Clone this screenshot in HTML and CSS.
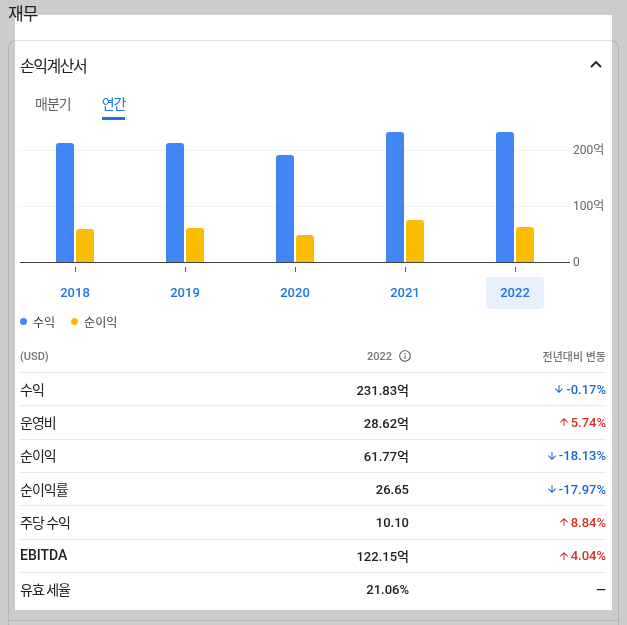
FILE: index.html
```html
<!DOCTYPE html>
<html lang="ko">
<head>
    <meta charset="UTF-8">
    <meta name="viewport" content="width=device-width, initial-scale=1.0">
    <title>재무</title>
    <link rel="stylesheet" href="styles.css">
</head>
<body>
    <h1 class="page-title">재무</h1>

    <section class="card">
        <div class="card-header">
            <span class="card-title">손익계산서</span>
            <svg class="chevron" viewBox="0 0 24 24" width="24" height="24"><path d="M7 14l5-5 5 5"/></svg>
        </div>

        <div class="tabs">
            <span class="tab">매분기</span>
            <span class="tab tab-active">연간</span>
        </div>

        <div class="chart">
            <div class="chart-row">
                <div class="plot">
                    <div class="bar-group"><div class="bar bar-revenue" style="height:119px"></div><div class="bar bar-income" style="height:33px"></div></div>
                    <div class="bar-group"><div class="bar bar-revenue" style="height:119.5px"></div><div class="bar bar-income" style="height:34px"></div></div>
                    <div class="bar-group"><div class="bar bar-revenue" style="height:107.5px"></div><div class="bar bar-income" style="height:27px"></div></div>
                    <div class="bar-group"><div class="bar bar-revenue" style="height:130px"></div><div class="bar bar-income" style="height:42px"></div></div>
                    <div class="bar-group"><div class="bar bar-revenue" style="height:130px"></div><div class="bar bar-income" style="height:34.6px"></div></div>
                </div>
                <div class="y-axis">
                    <span>200억</span>
                    <span>100억</span>
                    <span>0</span>
                </div>
            </div>
            <div class="x-axis">
                <div class="x-item"><span class="tick"></span><span class="year">2018</span></div>
                <div class="x-item"><span class="tick"></span><span class="year">2019</span></div>
                <div class="x-item"><span class="tick"></span><span class="year">2020</span></div>
                <div class="x-item"><span class="tick"></span><span class="year">2021</span></div>
                <div class="x-item"><span class="tick"></span><span class="year year-active">2022</span></div>
            </div>
        </div>

        <div class="legend">
            <span class="legend-item"><span class="dot dot-revenue"></span>수익</span>
            <span class="legend-item"><span class="dot dot-income"></span>순이익</span>
        </div>

        <div class="fin-table">
            <div class="fin-row fin-head">
                <span>(USD)</span>
                <span class="head-year">2022
                    <svg class="info-icon" viewBox="0 0 24 24" width="14" height="14"><path d="M11 7h2v2h-2zm0 4h2v6h-2zm1-9C6.48 2 2 6.48 2 12s4.480 10 10 10 10-4.48 10-10S17.52 2 12 2zm0 18c-4.41 0-8-3.59-8-8s3.59-8 8-8 8 3.59 8 8-3.59 8-8 8z"/></svg>
                </span>
                <span class="head-change">전년대비 변동</span>
            </div>
            <div class="fin-row">
                <span class="fin-label">수익</span>
                <span class="fin-value">231.83억</span>
                <span class="fin-change down"><svg class="arrow" viewBox="0 0 24 24" width="12" height="12"><path d="M20 12l-1.41-1.41L13 16.17V4h-2v12.17l-5.58-5.59L4 12l8 8 8-8z"/></svg>-0.17%</span>
            </div>
            <div class="fin-row">
                <span class="fin-label">운영비</span>
                <span class="fin-value">28.62억</span>
                <span class="fin-change up"><svg class="arrow" viewBox="0 0 24 24" width="12" height="12"><path d="M4 12l1.41 1.41L11 7.83V20h2V7.83l5.58 5.59L20 12l-8-8-8 8z"/></svg>5.74%</span>
            </div>
            <div class="fin-row">
                <span class="fin-label">순이익</span>
                <span class="fin-value">61.77억</span>
                <span class="fin-change down"><svg class="arrow" viewBox="0 0 24 24" width="12" height="12"><path d="M20 12l-1.41-1.41L13 16.17V4h-2v12.17l-5.58-5.59L4 12l8 8 8-8z"/></svg>-18.13%</span>
            </div>
            <div class="fin-row">
                <span class="fin-label">순이익률</span>
                <span class="fin-value">26.65</span>
                <span class="fin-change down"><svg class="arrow" viewBox="0 0 24 24" width="12" height="12"><path d="M20 12l-1.41-1.41L13 16.17V4h-2v12.17l-5.58-5.59L4 12l8 8 8-8z"/></svg>-17.97%</span>
            </div>
            <div class="fin-row">
                <span class="fin-label">주당 수익</span>
                <span class="fin-value">10.10</span>
                <span class="fin-change up"><svg class="arrow" viewBox="0 0 24 24" width="12" height="12"><path d="M4 12l1.41 1.41L11 7.83V20h2V7.83l5.58 5.59L20 12l-8-8-8 8z"/></svg>8.84%</span>
            </div>
            <div class="fin-row">
                <span class="fin-label fin-label-latin">EBITDA</span>
                <span class="fin-value">122.15억</span>
                <span class="fin-change up"><svg class="arrow" viewBox="0 0 24 24" width="12" height="12"><path d="M4 12l1.41 1.41L11 7.83V20h2V7.83l5.58 5.59L20 12l-8-8-8 8z"/></svg>4.04%</span>
            </div>
            <div class="fin-row">
                <span class="fin-label">유효 세율</span>
                <span class="fin-value">21.06%</span>
                <span class="fin-change">—</span>
            </div>
        </div>

        <div class="card-next"></div>
    </section>
</body>
</html>
```

FILE: styles.css
```css
/* Nền trang */
html {
    background-color: #cccccc;
    overflow: hidden;
}

body {
    margin: 0 8px;
    font-family: Roboto, "Noto Sans CJK KR", sans-serif;
    color: #202124;
}

/* Tấm nền trắng phía sau */
body::before {
    content: "";
    position: fixed;
    left: 15px;
    top: 15px;
    width: 597px;
    height: 595px;
    background-color: #ffffff;
    z-index: -1;
}

.page-title {
    margin: 0;
    padding-top: 2px;
    font-size: 17px;
    font-weight: 400;
    line-height: 24px;
    letter-spacing: -1px;
}

/* Thẻ báo cáo */
.card {
    margin-top: 14px;
    border: 1px solid rgba(0, 0, 0, 0.12);
    border-bottom: none;
    border-radius: 8px 8px 0 0;
    padding: 0 12px 0 11px;
}

.card-header {
    height: 48px;
    display: flex;
    align-items: center;
    justify-content: space-between;
}

.card-title {
    font-size: 16px;
    letter-spacing: -1.5px;
    margin-top: -1px;
}

.chevron {
    fill: none;
    stroke: #202124;
    stroke-width: 1.8;
    margin-right: -2px;
}

/* Tabs */
.tabs {
    display: flex;
    gap: 31px;
    padding-left: 15px;
}

.tab {
    font-size: 14px;
    line-height: 20px;
    padding: 5px 0 3px;
    color: #5f6368;
    letter-spacing: -1px;
    border-bottom: 3px solid transparent;
}

.tab-active {
    color: #1a73e8;
    border-bottom-color: #1a73e8;
}

/* Biểu đồ */
.chart-row {
    display: flex;
}

.plot {
    width: 550px;
    height: 142px;
    display: flex;
    align-items: flex-end;
    border-bottom: 1px solid #3c4043;
    background-image: linear-gradient(to bottom,
        transparent 30px, #f1f3f4 30px, #f1f3f4 31px, transparent 31px,
        transparent 86px, #f1f3f4 86px, #f1f3f4 87px, transparent 87px);
}

.bar-group {
    width: 110px;
    display: flex;
    justify-content: center;
    align-items: flex-end;
    gap: 2px;
}

.bar {
    width: 18px;
    border-radius: 3px 3px 0 0;
}

.bar-revenue {
    background-color: #4285f4;
}

.bar-income {
    background-color: #fbbc04;
}

.y-axis {
    display: flex;
    flex-direction: column;
    gap: 42px;
    padding: 23px 0 0 3px;
    margin-bottom: -7px;
    font-size: 12px;
    line-height: 14px;
    color: #5f6368;
}

.x-axis {
    display: flex;
    width: 550px;
}

.x-item {
    width: 110px;
    display: flex;
    flex-direction: column;
    align-items: center;
}

.tick {
    width: 1px;
    height: 5px;
    margin-top: 4px;
    background-color: #5f6368;
}

.year {
    margin-top: 5px;
    width: 58px;
    height: 32px;
    line-height: 32px;
    text-align: center;
    border-radius: 4px;
    font-size: 13px;
    font-weight: 500;
    color: #1a73e8;
}

.year-active {
    background-color: #e8f0fe;
}

/* Chú thích */
.legend {
    display: flex;
    align-items: center;
    height: 24px;
    font-size: 12px;
    color: #3c4043;
}

.legend-item {
    display: flex;
    align-items: center;
    gap: 6px;
    margin-right: 16px;
}

.dot {
    width: 7px;
    height: 7px;
    border-radius: 50%;
}

.dot-revenue {
    background-color: #4285f4;
}

.dot-income {
    background-color: #fbbc04;
}

/* Bảng số liệu */
.fin-table {
    margin-top: 7px;
}

.fin-row {
    display: grid;
    grid-template-columns: 1fr 120px 196px;
    align-items: center;
    box-sizing: border-box;
    height: 33.33px;
    border-bottom: 1px solid #e8eaed;
}

.fin-row:last-child {
    border-bottom: none;
}

.fin-head {
    height: 33px;
    font-size: 11px;
    font-weight: 500;
    color: #70757a;
}

.head-year {
    display: flex;
    justify-content: flex-end;
    align-items: center;
    gap: 6px;
}

.info-icon {
    fill: #5f6368;
    margin-right: -2px;
}

.head-change {
    text-align: right;
}

.fin-label {
    font-size: 14px;
    letter-spacing: -1px;
    margin-top: -1px;
}

.fin-label-latin {
    font-weight: 500;
    letter-spacing: 0;
}

.fin-value {
    text-align: right;
    font-size: 13px;
    font-weight: 500;
    margin-right: 1px;
}

.fin-change {
    display: flex;
    justify-content: flex-end;
    align-items: center;
    gap: 1px;
    font-size: 13px;
    font-weight: 500;
}

.arrow {
    fill: currentColor;
}

.up {
    color: #d93025;
}

.down {
    color: #1967d2;
}

.card-next {
    margin: 13.67px -12px 0 -11px;
    height: 4px;
    border-top: 1px solid rgba(0, 0, 0, 0.12);
}
```
